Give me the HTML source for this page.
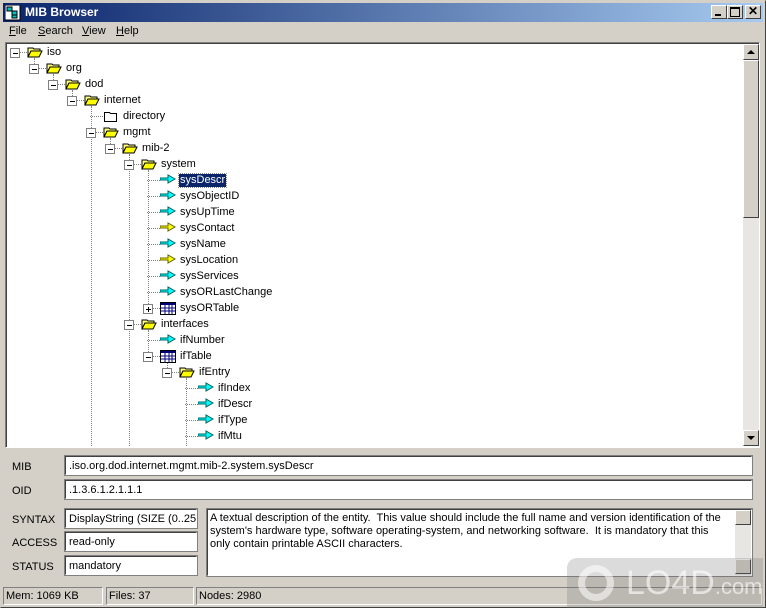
<!DOCTYPE html><html><head><style>
body{margin:0;width:766px;height:608px;background:#d4d0c8;font-family:"Liberation Sans",Tahoma,sans-serif;font-size:11px;position:relative;overflow:hidden}
.a{position:absolute}
.sunk{border-top:1px solid #808080;border-left:1px solid #808080;border-right:1px solid #fff;border-bottom:1px solid #fff;box-shadow:inset 1px 1px 0 #404040;background:#fff}
.fld{position:absolute;background:#fff;border:1px solid;border-color:#404040 #fff #fff #404040;outline:1px solid #808080;box-sizing:border-box;padding:3px 3px 0;font-size:11px;white-space:nowrap;overflow:hidden}
.lbl{position:absolute;font-size:11px;color:#000}
.vl{position:absolute;width:0;border-left:1px dotted #808080}
.hl{position:absolute;height:0;border-top:1px dotted #808080}
.box{position:absolute;width:8px;height:8px;border:1px solid #808080;background:#fff}
.box:before{content:"";position:absolute;left:2px;top:4px;width:5px;height:1px;background:#000}
.box.p:after{content:"";position:absolute;left:4px;top:2px;width:1px;height:5px;background:#000}
.t{position:absolute;font-size:11px;line-height:13px;white-space:nowrap}
.btn{position:absolute;background:#d4d0c8;border:1px solid;border-color:#fff #404040 #404040 #fff;box-sizing:border-box}
.sp{position:absolute;border:1px solid;border-color:#808080 #fff #fff #808080;box-sizing:border-box;height:18px;padding:2px 2px;font-size:11px}
</style></head><body>
<div class="a" style="left:0;top:0;width:766px;height:608px;border:1px solid;border-color:#d4d0c8 #404040 #404040 #d4d0c8;box-sizing:border-box"></div>
<div class="a" style="left:3px;top:3px;width:760px;height:19px;background:linear-gradient(90deg,#0a246a,#a6caf0)"></div>
<svg class="a" style="left:5px;top:5px" width="16" height="16"><rect x="0" y="0" width="15" height="15" fill="#fff" stroke="#000"/><rect x="2" y="2" width="5" height="4" fill="#00c0c0" stroke="#000"/><rect x="7" y="6" width="5" height="4" fill="#00c0c0" stroke="#000"/><rect x="7" y="10" width="5" height="3" fill="#00c0c0" stroke="#000"/></svg>
<div class="a" style="left:25px;top:5px;color:#fff;font-weight:bold;font-size:12px">MIB Browser</div>
<div class="btn" style="left:711px;top:5px;width:16px;height:14px"><div class="a" style="left:3px;top:8px;width:6px;height:2px;background:#000"></div></div>
<div class="btn" style="left:727px;top:5px;width:16px;height:14px"><div class="a" style="left:2px;top:1px;width:8px;height:7px;border:1px solid #000;border-top-width:2px"></div></div>
<div class="btn" style="left:745px;top:5px;width:16px;height:14px;font-size:12px;font-weight:bold;line-height:11px;text-align:center">✕</div>
<div class="a" style="left:9px;top:25px"><u>F</u>ile</div>
<div class="a" style="left:38px;top:25px"><u>S</u>earch</div>
<div class="a" style="left:82px;top:25px"><u>V</u>iew</div>
<div class="a" style="left:116px;top:25px"><u>H</u>elp</div>
<div class="a sunk" style="left:5px;top:42px;width:753px;height:404px"></div>
<div class="a" style="left:743px;top:44px;width:16px;height:402px;background:#e8e6e2"></div>
<div class="btn" style="left:743px;top:44px;width:16px;height:16px"><div class="a" style="left:3px;top:5px;width:0;height:0;border:4px solid transparent;border-bottom-color:#000;border-top:0"></div></div>
<div class="btn" style="left:743px;top:60px;width:16px;height:158px"></div>
<div class="btn" style="left:743px;top:430px;width:16px;height:16px"><div class="a" style="left:3px;top:5px;width:0;height:0;border:4px solid transparent;border-top-color:#000;border-bottom:0"></div></div>
<div id="tree"></div>
<div class="lbl" style="left:12px;top:461px">MIB</div>
<div class="fld" style="left:65px;top:456px;width:687px;height:19px">.iso.org.dod.internet.mgmt.mib-2.system.sysDescr</div>
<div class="lbl" style="left:12px;top:485px">OID</div>
<div class="fld" style="left:65px;top:480px;width:687px;height:19px">.1.3.6.1.2.1.1.1</div>
<div class="lbl" style="left:12px;top:514px">SYNTAX</div>
<div class="fld" style="left:65px;top:509px;width:132px;height:19px">DisplayString (SIZE (0..255</div>
<div class="lbl" style="left:12px;top:537px">ACCESS</div>
<div class="fld" style="left:65px;top:532px;width:132px;height:19px">read-only</div>
<div class="lbl" style="left:12px;top:561px">STATUS</div>
<div class="fld" style="left:65px;top:556px;width:132px;height:19px">mandatory</div>
<div class="fld" style="left:207px;top:509px;width:545px;height:67px;white-space:normal;line-height:13px;padding:2px 20px 0 2px">A textual description of the entity.&nbsp; This value should include the full name and version identification of the system's hardware type, software operating-system, and networking software.&nbsp; It is mandatory that this only contain printable ASCII characters.</div>
<div class="a" style="left:735px;top:510px;width:16px;height:65px;background:#e8e6e2"></div>
<div class="btn" style="left:735px;top:510px;width:16px;height:15px"></div>
<div class="btn" style="left:735px;top:559px;width:16px;height:15px"></div>
<div class="sp" style="left:3px;top:587px;width:100px">Mem: 1069 KB</div>
<div class="sp" style="left:106px;top:587px;width:88px">Files: 37</div>
<div class="sp" style="left:196px;top:587px;width:566px">Nodes: 2980</div>
<div class="a" style="left:567px;top:558px;width:196px;height:50px;background:rgba(110,110,110,.25);border-radius:10px 0 0 0"></div>
<div class="a" style="left:626px;top:564px;font-size:34px;color:rgba(255,255,255,.6);font-family:'Liberation Sans',sans-serif">LO4D<span style="font-size:22px">.com</span></div>
<div class="a" style="left:578px;top:565px;width:36px;height:36px;border-radius:50%;border:7px solid rgba(255,255,255,.55);box-sizing:border-box"></div>
<script>
var rows=[["iso",47,52,"-","of"],["org",66,68,"-","of"],["dod",85,84,"-","of"],["internet",104,100,"-","of"],["directory",123,116,"","f"],["mgmt",123,132,"-","of"],["mib-2",142,148,"-","of"],["system",161,164,"-","of"],["sysDescr",180,180,"","c"],["sysObjectID",180,196,"","c"],["sysUpTime",180,212,"","c"],["sysContact",180,228,"","y"],["sysName",180,244,"","c"],["sysLocation",180,260,"","y"],["sysServices",180,276,"","c"],["sysORLastChange",180,292,"","c"],["sysORTable",180,308,"+","t"],["interfaces",161,324,"-","of"],["ifNumber",180,340,"","c"],["ifTable",180,356,"-","t"],["ifEntry",199,372,"-","of"],["ifIndex",218,388,"","c"],["ifDescr",218,404,"","c"],["ifType",218,420,"","c"],["ifMtu",218,436,"","c"]];
var vl=[[34,58,68],[53,74,84],[72,90,100],[91,106,446],[110,138,148],[129,154,446],[148,170,308],[148,330,356],[167,362,372],[186,378,446]];
var h="";
vl.forEach(function(v){h+='<div class="vl" style="left:'+v[0]+'px;top:'+v[1]+'px;height:'+(v[2]-v[1])+'px"></div>'});
var ic={of:'<path d="M1 3h5l1 1h6v2H4L1 12z" fill="#ffff80" stroke="#000"/><path d="M1 12l3-6h11l-3 6z" fill="#ffff00" stroke="#000"/>',
f:'<path d="M1.5 3.5h5l1 1h6v8h-12z" fill="#fff" stroke="#000"/>',
c:'<path d="M0 5h8V2l7 4-7 4V7H0z" fill="#00ffff" stroke="#006060"/>',
y:'<path d="M0 5h8V2l7 4-7 4V7H0z" fill="#ffff00" stroke="#606000"/>',
t:'<rect x="0.5" y="1.5" width="15" height="12" fill="#fff" stroke="#000"/><rect x="1" y="2" width="14" height="2" fill="#000080"/><path d="M1 7h14M1 10h14M5 4v9M9 4v9M12 4v9" stroke="#000080"/>'};
rows.forEach(function(r){var x=r[1],y=r[2],ix=x-20,lx=x-33;
 if(r[3]){h+='<div class="hl" style="left:'+(lx+4)+'px;top:'+y+'px;width:'+(ix-lx-4)+'px"></div><div class="box'+(r[3]=="+"?" p":"")+'" style="left:'+(lx-4)+'px;top:'+(y-4)+'px"></div>';}
 else h+='<div class="hl" style="left:'+(lx)+'px;top:'+y+'px;width:'+(ix-lx)+'px"></div>';
 h+='<svg class="a" style="left:'+ix+'px;top:'+(y-7)+'px" width="16" height="14">'+ic[r[4]]+'</svg>';
 var sel=r[0]=="sysDescr";
 h+='<div class="t" style="left:'+(x-1)+'px;top:'+(y-6)+'px;padding:0 1px;'+(sel?'background:#0a246a;color:#fff;outline:1px dotted #888':'')+'">'+r[0]+'</div>';});
document.getElementById("tree").innerHTML=h;
</script>
</body></html>
